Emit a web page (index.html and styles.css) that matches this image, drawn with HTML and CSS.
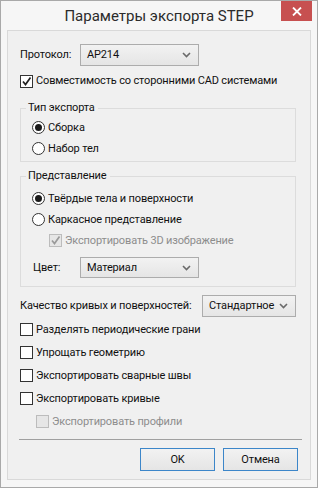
FILE: index.html
```html
<!DOCTYPE html>
<html lang="ru">
<head>
    <meta charset="UTF-8">
    <title>Параметры экспорта STEP</title>
    <link rel="stylesheet" href="styles.css">
</head>
<body>
    <div class="window">
        <div class="titlebar">
            <div class="title">Параметры экспорта STEP</div>
            <div class="close">
                <svg width="10" height="9" viewBox="0 0 10 9"><path d="M1 0.5 L9 8.5 M9 0.5 L1 8.5" stroke="#fff" stroke-width="1.8" fill="none"/></svg>
            </div>
        </div>
        <div class="client">
            <div class="row row-proto">
                <span class="lbl lbl-proto">Протокол:</span>
                <div class="select sel-proto"><span>AP214</span><svg class="arrow" width="9" height="6" viewBox="0 0 9 6"><path d="M1 1 L4.5 4.5 L8 1" stroke="#6a6a6a" stroke-width="1.6" fill="none"/></svg></div>
            </div>
            <label class="check check-compat"><span class="box"><svg width="11" height="11" viewBox="0 0 11 11"><path d="M2 5.5 L4.5 8.5 L9.5 1.5" stroke="#222" stroke-width="1.7" fill="none"/></svg></span>Совместимость со сторонними CAD системами</label>

            <fieldset class="group group-type">
                <legend>Тип экспорта</legend>
                <label class="radio"><span class="circle on"></span>Сборка</label>
                <label class="radio"><span class="circle"></span>Набор тел</label>
            </fieldset>

            <fieldset class="group group-view">
                <legend>Представление</legend>
                <label class="radio"><span class="circle on"></span>Твёрдые тела и поверхности</label>
                <label class="radio"><span class="circle"></span>Каркасное представление</label>
                <label class="radio disabled sub"><span class="box"><svg width="11" height="11" viewBox="0 0 11 11"><path d="M2 5.5 L4.5 8.5 L9.5 1.5" stroke="#9a9a9a" stroke-width="1.7" fill="none"/></svg></span>Экспортировать 3D изображение</label>
                <div class="row row-color">
                    <span class="lbl lbl-color">Цвет:</span>
                    <div class="select sel-color"><span>Материал</span><svg class="arrow" width="9" height="6" viewBox="0 0 9 6"><path d="M1 1 L4.5 4.5 L8 1" stroke="#6a6a6a" stroke-width="1.6" fill="none"/></svg></div>
                </div>
            </fieldset>

            <div class="row row-quality">
                <span class="lbl">Качество кривых и поверхностей:</span>
                <div class="select sel-quality"><span>Стандартное</span><svg class="arrow" width="9" height="6" viewBox="0 0 9 6"><path d="M1 1 L4.5 4.5 L8 1" stroke="#6a6a6a" stroke-width="1.6" fill="none"/></svg></div>
            </div>
            <div class="options">
                <label class="check"><span class="box"></span>Разделять периодические грани</label>
                <label class="check"><span class="box"></span>Упрощать геометрию</label>
                <label class="check"><span class="box"></span>Экспортировать сварные швы</label>
                <label class="check"><span class="box"></span>Экспортировать кривые</label>
                <label class="check disabled sub2"><span class="box"></span>Экспортировать профили</label>
            </div>

            <div class="separator"></div>
            <div class="buttons">
                <button class="btn">OK</button>
                <button class="btn">Отмена</button>
            </div>
        </div>
    </div>
</body>
</html>
```

FILE: styles.css
```css
body {
    margin: 0;
    font-family: Roboto, 'Noto Sans', sans-serif;
    font-size: 11px;
    letter-spacing: -0.15px;
    line-height: 16px;
    color: #111;
}
.window {
    width: 318px;
    height: 488px;
    box-sizing: border-box;
    border: 1px solid #a9a9a9;
    background-color: #f6f6f6;
    display: flex;
    flex-direction: column;
}
.titlebar {
    height: 29px;
    flex-shrink: 0;
    display: flex;
}
.title {
    flex: 1;
    text-align: center;
    padding-left: 36px;
    padding-top: 5px;
    font-size: 15px;
    letter-spacing: 0;
    line-height: 20px;
    color: #2b2b2b;
}
.close {
    width: 31px;
    height: 20px;
    margin-right: 5px;
    background-color: #c75050;
    display: flex;
    justify-content: center;
    align-items: center;
}
.client {
    margin: 0 6px 7px 6px;
    flex: 1;
    border: 1px solid #d9d9d9;
    background-color: #f0f0f0;
    padding: 13px 12px 0 12px;
    display: flex;
    flex-direction: column;
    white-space: nowrap;
}
.row {
    display: flex;
    align-items: center;
}
.row-proto {
    height: 22px;
}
.lbl-proto {
    width: 60px;
}
.select {
    border: 1px solid #acacac;
    background: linear-gradient(#f2f2f2, #e5e5e5);
    display: flex;
    align-items: center;
    justify-content: space-between;
    padding: 0 7px 0 6px;
    box-sizing: border-box;
    color: #111;
}
.sel-proto {
    width: 119px;
    height: 22px;
}
.check, .radio {
    display: flex;
    align-items: center;
}
.check {
    height: 23px;
}
.radio {
    height: 21px;
}
.check-compat {
    height: 20px;
    margin-top: 5px;
}
.box {
    width: 13px;
    height: 13px;
    box-sizing: border-box;
    border: 1px solid #333;
    background-color: #fff;
    margin-right: 3px;
    display: flex;
    align-items: center;
    justify-content: center;
    flex-shrink: 0;
}
.disabled {
    color: #8d8d8d;
}
.disabled .box {
    border-color: #bcbcbc;
    background-color: #e6e6e6;
}
.circle {
    width: 13px;
    height: 13px;
    box-sizing: border-box;
    border: 1px solid #333;
    border-radius: 50%;
    background-color: #fff;
    margin-right: 3px;
    display: flex;
    align-items: center;
    justify-content: center;
}
.circle.on::after {
    content: '';
    width: 7px;
    height: 7px;
    border-radius: 50%;
    background-color: #1a1a1a;
}
.group {
    width: 276px;
    box-sizing: border-box;
    margin: 0;
    border: 1px solid #dcdcdc;
    padding: 1px 0 2px 11px;
    min-width: 0;
}
.group legend {
    padding: 0 3px 0 2px;
    margin-left: -6px;
    line-height: 16px;
}
.group-type {
    margin-top: 9px;
}
.group-view {
    margin-top: 6px;
    padding-top: 4px;
    padding-bottom: 8px;
}
.sub {
    margin-left: 17px;
}
.row-color {
    margin-top: 6px;
    height: 21px;
}
.lbl-color {
    width: 47px;
    padding-left: 1px;
}
.sel-color {
    width: 119px;
    height: 21px;
}
.row-quality {
    margin-top: 8px;
    justify-content: space-between;
    width: 276px;
    height: 22px;
}
.sel-quality {
    width: 94px;
    height: 22px;
}
.options {
    margin-top: 1px;
    display: flex;
    flex-direction: column;
}
.sub2 {
    margin-left: 16px;
}
.separator {
    margin-top: 6px;
    margin-left: -1px;
    width: 283px;
    border-top: 1px solid #a0a0a0;
}
.buttons {
    display: flex;
    justify-content: flex-end;
    gap: 8px;
    margin-top: 8px;
}
.btn {
    width: 75px;
    height: 23px;
    padding: 0;
    font-family: inherit;
    font-size: 11px;
    letter-spacing: -0.15px;
    color: #111;
    border: 1px solid #3c86c9;
    background: linear-gradient(#f2f2f2, #e5e5e5);
}
```
